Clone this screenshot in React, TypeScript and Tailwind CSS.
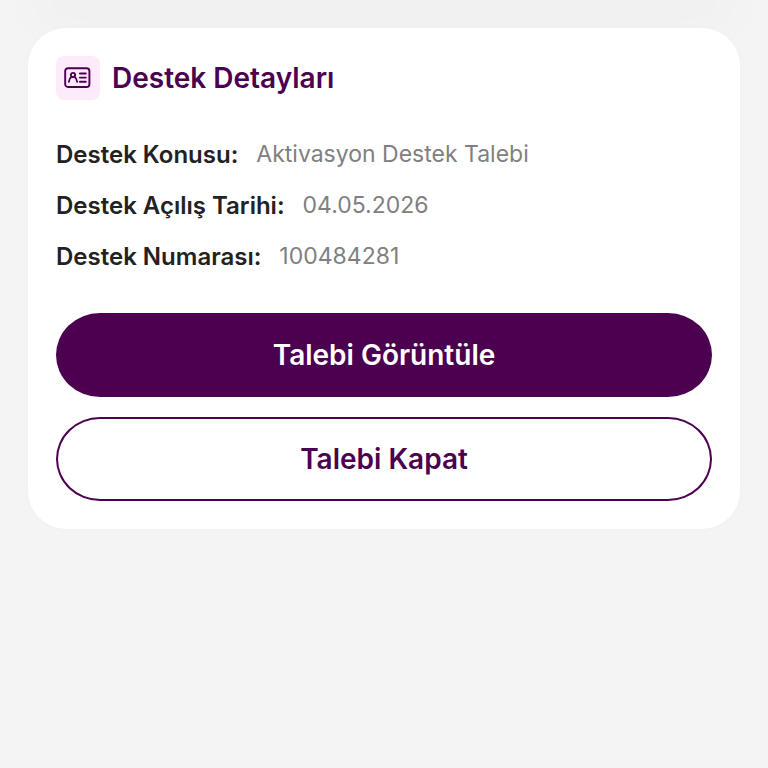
import React from 'react';

interface Detail {
  label: string;
  value: string;
}

const details: Detail[] = [
  { label: 'Destek Konusu:', value: 'Aktivasyon Destek Talebi' },
  { label: 'Destek Açılış Tarihi:', value: '04.05.2026' },
  { label: 'Destek Numarası:', value: '100484281' },
];

const IdCardIcon: React.FC = () => (
  <svg
    width="28"
    height="22"
    viewBox="0 0 28 22"
    fill="none"
    stroke="currentColor"
    strokeWidth="1.9"
    strokeLinecap="round"
    strokeLinejoin="round"
    aria-hidden="true"
  >
    <rect x="1.2" y="1.2" width="24.2" height="18.8" rx="2.8" />
    <circle cx="9" cy="8" r="2.1" />
    <path d="M4.9 14.8C5 12.6 5.9 11 7.6 9.8M10.4 9.8C12.1 11 13 12.6 13.1 14.8" />
    <path d="M15.9 6.5H21.8M15.9 10.6H21.8M15.9 14.7H21.8" />
  </svg>
);

export default function App() {
  return (
    <div className="min-h-screen bg-[#f4f4f4] p-7 font-['Inter',sans-serif]">
      {/* Shadow cast by the card scrolled off above */}
      <div className="pointer-events-none absolute inset-x-0 top-0 h-20 overflow-hidden px-12">
        <div className="-mt-5 h-5 shadow-[0_8px_56px_16px_rgba(0,0,0,0.025)]" />
      </div>

      <main className="relative rounded-[38px] bg-white p-7 shadow-[0_0_8px_rgba(0,0,0,0.02)]">
        <header className="flex items-center gap-3">
          <span className="flex size-11 items-center justify-center rounded-lg bg-[#fdebfc] text-[#4c0050]">
            <IdCardIcon />
          </span>
          <h1 className="text-[28px] leading-11 font-semibold text-[#4c0050]">Destek Detayları</h1>
        </header>

        <dl className="mt-[39px] flex flex-col gap-[19px]">
          {details.map(({ label, value }) => (
            <div key={label} className="flex flex-wrap gap-x-[18px]">
              <dt className="text-[24px] leading-8 font-semibold text-[#222]">{label}</dt>
              <dd className="text-[23px] leading-[30px] text-[#808080]">{value}</dd>
            </div>
          ))}
        </dl>

        <div className="mt-10 flex flex-col gap-5">
          <button
            type="button"
            className="h-21 rounded-[44px/42px] bg-[#4c0050] text-[28px] font-semibold text-white"
          >
            Talebi Görüntüle
          </button>
          <button
            type="button"
            className="h-21 rounded-[44px/42px] border-2 border-[#4c0050] bg-white text-[28px] font-semibold text-[#4c0050]"
          >
            Talebi Kapat
          </button>
        </div>
      </main>
    </div>
  );
}
